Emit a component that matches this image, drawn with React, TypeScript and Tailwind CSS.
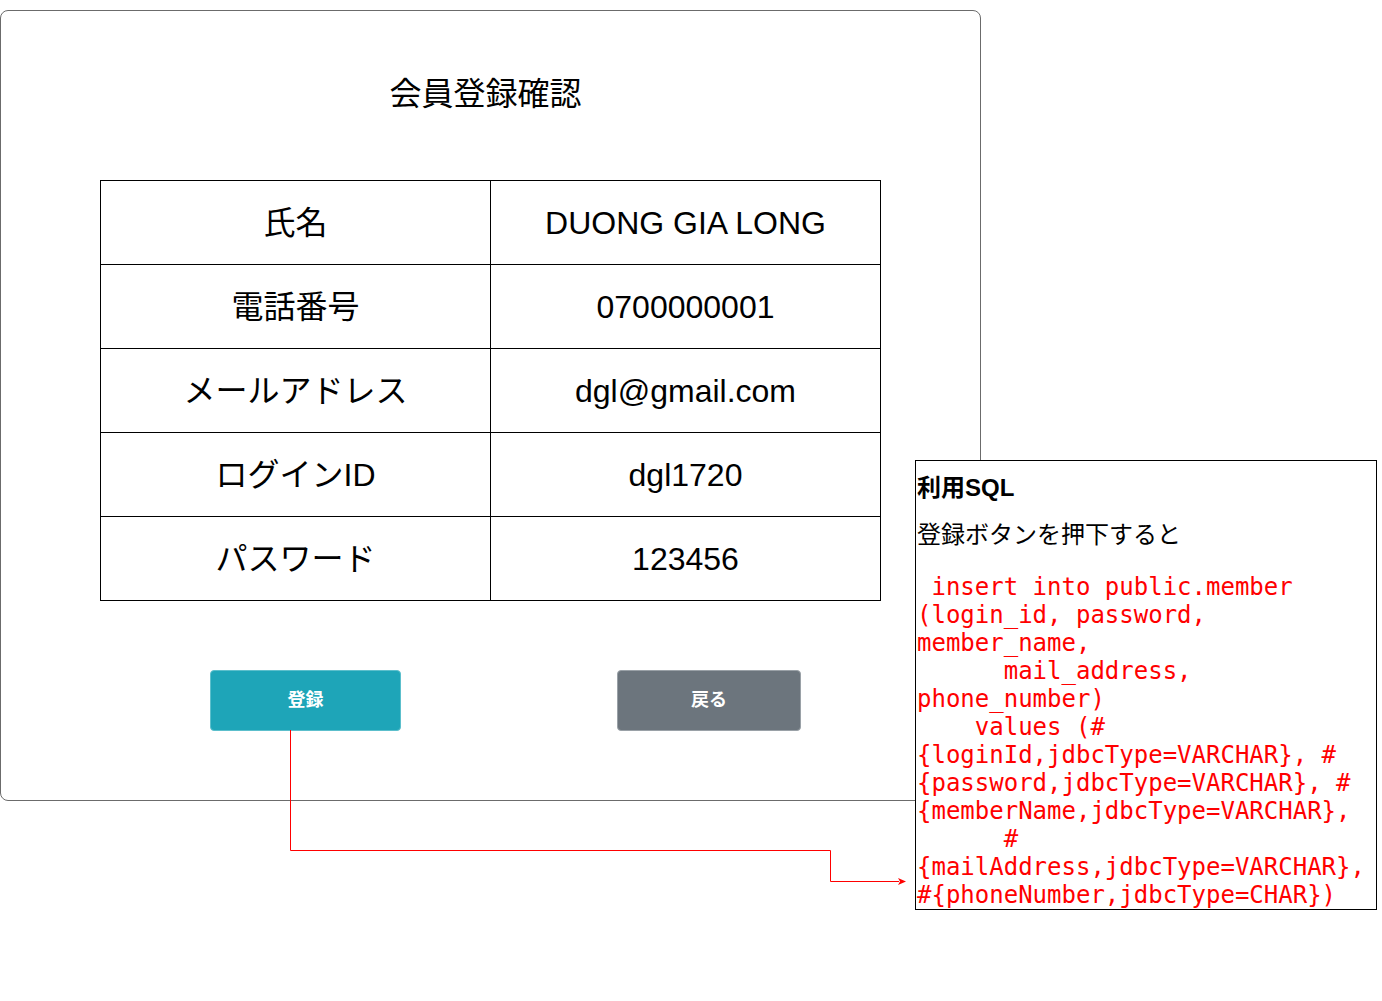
import React from "react";

interface Row {
  label: string;
  value: string;
}

const rows: Row[] = [
  { label: "氏名", value: "DUONG GIA LONG" },
  { label: "電話番号", value: "0700000001" },
  { label: "メールアドレス", value: "dgl@gmail.com" },
  { label: "ログインID", value: "dgl1720" },
  { label: "パスワード", value: "123456" },
];

const sqlLines = [
  " insert into public.member",
  "(login_id, password,",
  "member_name,",
  "      mail_address,",
  "phone_number)",
  "    values (#",
  "{loginId,jdbcType=VARCHAR}, #",
  "{password,jdbcType=VARCHAR}, #",
  "{memberName,jdbcType=VARCHAR},",
  "      #",
  "{mailAddress,jdbcType=VARCHAR},",
  "#{phoneNumber,jdbcType=CHAR})",
];

const sans = "font-['Liberation_Sans','Noto_Sans_CJK_JP',sans-serif]";

export default function App() {
  return (
    <div className={`relative w-[1382px] h-[1001px] bg-white text-black ${sans}`}>
      {/* Screen frame */}
      <div className="absolute left-0 top-[10px] w-[981px] h-[791px] border border-[#6b6b6b] rounded-[8px] flex flex-col items-center">
        <h1 className="mt-[63px] pr-[10px] text-[32px] leading-[40px] font-normal">会員登録確認</h1>

        {/* Confirmation table */}
        <div className="mt-[66px] grid grid-cols-[390px_390px] border-t border-l border-black">
          {rows.map((r) => (
            <React.Fragment key={r.label}>
              <div className="h-[84px] border-r border-b border-black flex items-center justify-center text-[32px]">
                {r.label}
              </div>
              <div className="h-[84px] border-r border-b border-black flex items-center justify-center text-[32px]">
                {r.value}
              </div>
            </React.Fragment>
          ))}
        </div>

        {/* Buttons */}
        <div className="mt-[69px] w-full flex">
          <button className="ml-[209px] w-[191px] h-[61px] rounded-[4px] bg-[#1ea5b8] border border-[#5cbfcc] text-white text-[18px] font-bold">
            登録
          </button>
          <button className="ml-[216px] w-[184px] h-[61px] rounded-[4px] bg-[#6c757d] border border-[#9aa1a7] text-white text-[18px] font-bold">
            戻る
          </button>
        </div>
      </div>

      {/* Connector */}
      <svg className="absolute left-0 top-0 pointer-events-none" width="1382" height="1001">
        <polyline
          points="290.5,730 290.5,850.5 830.5,850.5 830.5,881.5 899,881.5"
          fill="none"
          stroke="#ff0000"
          strokeWidth="1"
        />
        <polygon points="906,881.5 898,878 900,881.5 898,885" fill="#ff0000" />
      </svg>

      {/* SQL note */}
      <div className="absolute left-[915px] top-[460px] w-[462px] h-[450px] border border-black bg-white pl-[1px] overflow-hidden">
        <div className="mt-[13px] text-[24px] leading-[28px] font-bold">利用SQL</div>
        <div className="mt-[19px] text-[24px] leading-[28px]">登録ボタンを押下すると</div>
        <pre className="mt-[24px] text-[24px] leading-[28px] text-[#ff0000] font-['DejaVu_Sans_Mono',monospace]">
          {sqlLines.join("\n")}
        </pre>
      </div>
    </div>
  );
}
